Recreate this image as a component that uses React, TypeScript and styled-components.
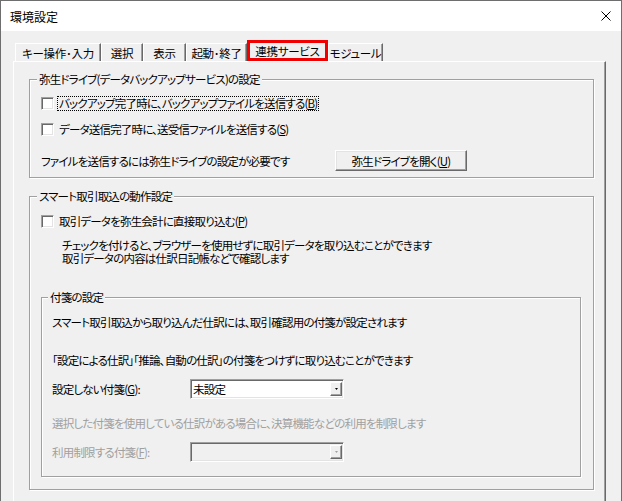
import React from 'react'
import styled, { createGlobalStyle } from 'styled-components'

const GlobalStyle = createGlobalStyle`
  html, body {
    margin: 0;
    padding: 0;
    background: #f0f0f0;
  }
  body {
    font-family: "Noto Sans CJK JP", "Noto Sans", sans-serif;
    font-size: 12px;
    color: #000;
  }
`

const Window = styled.div`
  width: 622px;
  height: 501px;
  box-sizing: border-box;
  border: 1px solid #6e6e6e;
  border-bottom: none;
  display: flex;
  flex-direction: column;
  background: #f0f0f0;
  overflow: hidden;
  font-feature-settings: "palt";
  font-size: 11.5px;
  letter-spacing: -0.8px;
`

const TitleBar = styled.div`
  height: 30px;
  flex: none;
  background: #fff;
  display: flex;
  align-items: center;
  justify-content: space-between;
  padding: 0 10px 0 9px;
  font-size: 12px;
  letter-spacing: 0;
`

const CloseButton = styled.div`
  width: 10px;
  height: 10px;
  display: flex;
`

const Body = styled.div`
  flex: 1;
  display: flex;
  flex-direction: column;
  padding: 9px 15px 0 12px;
  min-height: 0;
`

const TabStrip = styled.div`
  display: flex;
  align-items: flex-end;
  height: 21px;
  margin-left: 2px;
`

const Tab = styled.div<{ $w: number }>`
  width: ${p => p.$w}px;
  height: 18px;
  box-sizing: border-box;
  border-top: 1px solid #fff;
  border-left: 1px solid #fff;
  border-right: 1px solid #696969;
  box-shadow: inset -1px 0 #a0a0a0;
  display: flex;
  align-items: center;
  justify-content: center;
  white-space: nowrap;
  line-height: 14px;
  letter-spacing: -0.3px;
`

const ActiveTab = styled.div<{ $w: number }>`
  width: ${p => p.$w}px;
  height: 21px;
  box-sizing: border-box;
  border: 3px solid #f00000;
  background: #f0f0f0;
  display: flex;
  align-items: center;
  justify-content: center;
  white-space: nowrap;
  line-height: 14px;
  letter-spacing: -0.3px;
`

const Panel = styled.div`
  flex: 1;
  border-top: 1px solid #fff;
  border-left: 1px solid #fff;
  border-right: 1px solid #696969;
  box-shadow: inset -1px 0 #a0a0a0;
  padding: 0 11px 0 15px;
`

const Group = styled.div<{ $top: number; $pad: string }>`
  margin-top: ${p => p.$top}px;
  border: 1px solid #a0a0a0;
  box-shadow: 1px 1px 0 #fff, inset 1px 1px 0 #fff;
  padding: ${p => p.$pad};
  display: flex;
  flex-direction: column;
`

const Caption = styled.div`
  margin: -8px 0 0 -4px;
  padding: 0 2px;
  width: fit-content;
  background: #f0f0f0;
  line-height: 14px;
  white-space: nowrap;
`

const CheckRow = styled.div<{ $top: number }>`
  margin-top: ${p => p.$top}px;
  height: 16px;
  display: flex;
  align-items: center;
`

const Box = styled.div`
  width: 13px;
  height: 13px;
  box-sizing: border-box;
  border: 1px solid;
  border-color: #a0a0a0 #fff #fff #a0a0a0;
  box-shadow: inset 1px 1px 0 #696969, inset -1px -1px 0 #e3e3e3;
  background: #fff;
  margin-right: 3px;
  flex: none;
`

const CheckLabel = styled.span<{ $focus?: boolean }>`
  border: 1px dotted ${p => (p.$focus ? '#000' : 'transparent')};
  padding: 0 1px;
  line-height: 13px;
  white-space: nowrap;
`

const ButtonRow = styled.div<{ $top: number }>`
  margin-top: ${p => p.$top}px;
  display: grid;
  grid-template-columns: 294px 132px;
  align-items: center;
`

const PushButton = styled.div`
  height: 21px;
  box-sizing: border-box;
  border: 1px solid;
  border-color: #fff #696969 #696969 #fff;
  box-shadow: inset -1px -1px 0 #a0a0a0, inset 1px 1px 0 #e3e3e3;
  background: #f0f0f0;
  display: flex;
  align-items: center;
  justify-content: center;
  white-space: nowrap;
`

const Text = styled.div<{ $top: number; $indent?: number; $muted?: boolean; $lh?: number }>`
  margin-top: ${p => p.$top}px;
  margin-left: ${p => p.$indent ?? 0}px;
  line-height: ${p => p.$lh ?? 14}px;
  color: ${p => (p.$muted ? '#a0a0a0' : '#000')};
  white-space: nowrap;
`

const FieldRow = styled.div<{ $top: number; $muted?: boolean }>`
  margin-top: ${p => p.$top}px;
  display: grid;
  grid-template-columns: 138px 154px;
  align-items: center;
  color: ${p => (p.$muted ? '#a0a0a0' : '#000')};
  white-space: nowrap;
`

const Combo = styled.div<{ $disabled?: boolean }>`
  height: 20px;
  box-sizing: border-box;
  border: 1px solid;
  border-color: #a0a0a0 #fff #fff #a0a0a0;
  box-shadow: inset 1px 1px 0 #696969, inset -1px -1px 0 #e3e3e3;
  background: ${p => (p.$disabled ? '#f0f0f0' : '#fff')};
  display: flex;
  align-items: center;
  justify-content: space-between;
  padding: 2px 1px 2px 2px;
  color: #000;
`

const DropButton = styled.div<{ $disabled?: boolean }>`
  width: 12px;
  height: 14px;
  box-sizing: border-box;
  border: 1px solid;
  border-color: #fff #696969 #696969 #fff;
  box-shadow: inset -1px -1px 0 #a0a0a0;
  background: #f0f0f0;
  display: flex;
  align-items: center;
  justify-content: center;
`

const Arrow = ({ disabled }: { disabled?: boolean }) => (
  <svg width="3" height="2" viewBox="0 0 3 2">
    <path d="M0 0h3L1.5 2z" fill={disabled ? '#a0a0a0' : '#000'} />
  </svg>
)

const ComboBox = ({ value, disabled }: { value?: string; disabled?: boolean }) => (
  <Combo $disabled={disabled}>
    <span>{value}</span>
    <DropButton $disabled={disabled}>
      <Arrow disabled={disabled} />
    </DropButton>
  </Combo>
)

const tabs = [
  { label: 'キー操作･入力', w: 86 },
  { label: '選択', w: 42 },
  { label: '表示', w: 43 },
  { label: '起動･終了', w: 61 },
  { label: '連携サービス', w: 81, active: true },
  { label: 'モジュール', w: 55 },
]

export default function App() {
  return (
    <>
      <GlobalStyle />
      <Window>
        <TitleBar>
          <span>環境設定</span>
          <CloseButton>
            <svg width="10" height="10" viewBox="0 0 10 10">
              <path d="M0.5 0.5L9.5 9.5M9.5 0.5L0.5 9.5" stroke="#000" strokeWidth="1" />
            </svg>
          </CloseButton>
        </TitleBar>
        <Body>
          <TabStrip>
            {tabs.map(t =>
              t.active ? (
                <ActiveTab key={t.label} $w={t.w}>{t.label}</ActiveTab>
              ) : (
                <Tab key={t.label} $w={t.w}>{t.label}</Tab>
              )
            )}
          </TabStrip>
          <Panel>
            <Group $top={17} $pad="0 12px 6px 11px">
              <Caption>弥生ドライブ(データバックアップサービス)の設定</Caption>
              <CheckRow $top={9}>
                <Box />
                <CheckLabel $focus>バックアップ完了時に、バックアップファイルを送信する(<u>B</u>)</CheckLabel>
              </CheckRow>
              <CheckRow $top={10}>
                <Box />
                <CheckLabel>データ送信完了時に、送受信ファイルを送信する(<u>S</u>)</CheckLabel>
              </CheckRow>
              <ButtonRow $top={13}>
                <span>ファイルを送信するには弥生ドライブの設定が必要です</span>
                <PushButton>弥生ドライブを開く(<u>U</u>)</PushButton>
              </ButtonRow>
            </Group>

            <Group $top={18} $pad="0 12px 12px 11px">
              <Caption>スマート取引取込の動作設定</Caption>
              <CheckRow $top={10}>
                <Box />
                <CheckLabel>取引データを弥生会計に直接取り込む(<u>P</u>)</CheckLabel>
              </CheckRow>
              <Text $top={10} $indent={21} $lh={13}>
                チェックを付けると、ブラウザーを使用せずに取引データを取り込むことができます
                <br />
                取引データの内容は仕訳日記帳などで確認します
              </Text>

              <Group $top={32} $pad="0 12px 14px 10px">
                <Caption>付箋の設定</Caption>
                <Text $top={11}>スマート取引取込から取り込んだ仕訳には、取引確認用の付箋が設定されます</Text>
                <Text $top={24}>「設定による仕訳」「推論、自動の仕訳」の付箋をつけずに取り込むことができます</Text>
                <FieldRow $top={12}>
                  <span>設定しない付箋(<u>G</u>):</span>
                  <ComboBox value="未設定" />
                </FieldRow>
                <Text $top={17} $muted>選択した付箋を使用している仕訳がある場合に、決算機能などの利用を制限します</Text>
                <FieldRow $top={12} $muted>
                  <span>利用制限する付箋(<u>F</u>):</span>
                  <ComboBox disabled />
                </FieldRow>
              </Group>
            </Group>
          </Panel>
        </Body>
      </Window>
    </>
  )
}
